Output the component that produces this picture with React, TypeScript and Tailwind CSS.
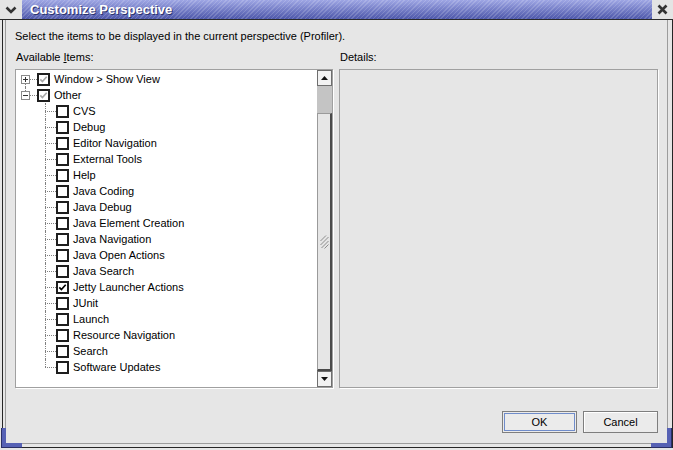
import React from 'react';

type CheckState = 'none' | 'checked' | 'grayed';

const children = [
  'CVS',
  'Debug',
  'Editor Navigation',
  'External Tools',
  'Help',
  'Java Coding',
  'Java Debug',
  'Java Element Creation',
  'Java Navigation',
  'Java Open Actions',
  'Java Search',
  'Jetty Launcher Actions',
  'JUnit',
  'Launch',
  'Resource Navigation',
  'Search',
  'Software Updates',
];

const CheckBox: React.FC<{ state: CheckState }> = ({ state }) => (
  <div className="w-[13px] h-[13px] shrink-0 border-2 border-[#1e1e1e] bg-white flex items-center justify-center">
    {state !== 'none' && (
      <svg width="9" height="9" viewBox="0 0 9 9">
        <path
          d="M1.3 4.3 L3.4 6.5 L7.7 1.8"
          fill="none"
          stroke={state === 'checked' ? '#000' : '#a8a8a8'}
          strokeWidth="1.7"
        />
      </svg>
    )}
  </div>
);

const Expander: React.FC<{ open: boolean }> = ({ open }) => (
  <div className="w-[9px] h-[9px] border border-[#8a8a8a] bg-white flex items-center justify-center relative">
    <div className="w-[5px] h-[1px] bg-[#333]" />
    {!open && <div className="absolute w-[1px] h-[5px] bg-[#333]" />}
  </div>
);

const TopRow: React.FC<{ label: string; open: boolean; first: boolean; last: boolean }> = ({ label, open, first, last }) => (
  <div className="flex items-center h-[16px]">
    <div className="ml-[5px] w-[9px] h-[16px] flex flex-col">
      <div className={`h-[4px] ml-[4px] ${first ? '' : 'border-l border-dotted border-[#808080]'}`} />
      <Expander open={open} />
      <div className={`h-[3px] ml-[4px] ${last ? '' : 'border-l border-dotted border-[#808080]'}`} />
    </div>
    <div className="w-[7px] h-0 border-t border-dotted border-[#808080]" />
    <CheckBox state="grayed" />
    <span className="ml-[4px] leading-[16px] whitespace-nowrap">{label}</span>
  </div>
);

const ChildRow: React.FC<{ label: string; last: boolean; state: CheckState }> = ({ label, last, state }) => (
  <div className="flex items-center h-[16px]">
    <div className="ml-[29px] w-[11px] h-[16px] flex flex-col">
      <div className="h-[8px] border-l border-dotted border-[#808080]" />
      <div className={`h-[8px] border-t border-dotted border-[#808080] ${last ? '' : 'border-l'}`} />
    </div>
    <CheckBox state={state} />
    <span className="ml-[4px] leading-[16px] whitespace-nowrap">{label}</span>
  </div>
);

const ScrollButton: React.FC<{ up: boolean }> = ({ up }) => (
  <div className="h-[16px] bg-[#f2f2f2] border border-[#6e6e6e] flex items-center justify-center">
    <svg width="7" height="4" viewBox="0 0 7 4">
      <path d={up ? 'M0 4 L3.5 0 L7 4 Z' : 'M0 0 L3.5 4 L7 0 Z'} fill="#111" />
    </svg>
  </div>
);

export default function App() {
  return (
    <div className="w-[673px] h-[450px] bg-[#e6e6e6] flex flex-col relative overflow-hidden font-['Liberation_Sans',Arial,sans-serif] text-[11px] text-black">
      {/* Title bar */}
      <div className="h-[20px] flex border-b border-[#2a2a2a] shrink-0">
        <div className="w-[22px] bg-[#e4e4e4] flex items-center justify-center">
          <svg width="12" height="8" viewBox="0 0 12 8">
            <path d="M1.5 1.5 L6 6 L10.5 1.5" fill="none" stroke="#333" strokeWidth="2.6" />
          </svg>
        </div>
        <div className="flex-1 flex items-center pl-[8px] bg-[image:repeating-linear-gradient(135deg,rgba(255,255,255,0.16)_0px,rgba(255,255,255,0.16)_1px,transparent_1px,transparent_3px),linear-gradient(to_bottom,#9ea6e4,#4d57aa)]">
          <span className="text-white font-bold text-[13px] leading-[19px] [text-shadow:1px_1px_0_#2c336e]">
            Customize Perspective
          </span>
        </div>
        <div className="w-[21px] bg-[#e4e4e4] flex items-center justify-center">
          <svg width="11" height="11" viewBox="0 0 11 11">
            <path d="M1.5 1.5 L9.5 9.5 M9.5 1.5 L1.5 9.5" fill="none" stroke="#333" strokeWidth="2.6" />
          </svg>
        </div>
      </div>

      {/* Frame */}
      <div className="flex-1 pl-[2px] pb-[2px] flex flex-col">
        <div className="flex-1 border-l border-r border-b border-[#262626] pl-[2px] pr-[4px] pb-[3px] flex flex-col">
          <div className="flex-1 border-l border-r border-b border-[#9c9c9c] pl-[9px] pr-[9px] pt-[10px] flex flex-col">
            <div className="leading-[13px] h-[13px]">
              Select the items to be displayed in the current perspective (Profiler).
            </div>

            <div className="mt-[8px] flex gap-[6px]">
              <div className="w-[318px] flex flex-col">
                <div className="leading-[13px] h-[13px] pl-[1px]">
                  Available <span className="underline">I</span>tems:
                </div>
                <div className="mt-[5px] h-[319px] border border-[#a0a0a0] shadow-[1px_1px_0_#ffffff] bg-white flex">
                  <div className="flex-1 pt-[1px] overflow-hidden">
                    <TopRow label="Window > Show View" open={false} first={true} last={false} />
                    <TopRow label="Other" open={true} first={false} last={true} />
                    {children.map((c, i) => (
                      <ChildRow
                        key={c}
                        label={c}
                        last={i === children.length - 1}
                        state={c === 'Jetty Launcher Actions' ? 'checked' : 'none'}
                      />
                    ))}
                  </div>
                  <div className="w-[15px] flex flex-col">
                    <ScrollButton up={true} />
                    <div className="h-[27px] bg-[#c4c4c4]" />
                    <div className="flex-1 bg-[#e6e6e6] border-l border-t border-[#9a9a9a] border-r-2 border-b-2 border-r-[#4a4a4a] border-b-[#4a4a4a] flex items-center justify-center">
                      <svg width="9" height="14" viewBox="0 0 9 14">
                        <path d="M0.5 6 L6 0.5 M0.5 10 L8.5 2 M1.5 13 L8.5 6 M4.5 13.5 L8.5 9.5" stroke="#8c8c8c" strokeWidth="1" />
                      </svg>
                    </div>
                    <ScrollButton up={false} />
                  </div>
                </div>
              </div>

              <div className="w-[319px] flex flex-col">
                <div className="leading-[13px] h-[13px] pl-[1px]">Details:</div>
                <div className="mt-[5px] h-[319px] border border-[#a0a0a0] shadow-[1px_1px_0_#ffffff] bg-[#e6e6e6]" />
              </div>
            </div>

            <div className="mt-[23px] flex justify-end gap-[6px]">
              <button className="w-[75px] h-[22px] bg-[#ebebeb] border border-[#7e7e7e] p-[1px] flex">
                <span className="flex-1 border border-[#6f8cca] flex items-center justify-center leading-none">OK</span>
              </button>
              <button className="w-[75px] h-[22px] bg-[#ebebeb] border border-[#7e7e7e] shadow-[inset_1px_1px_0_#ffffff] flex items-center justify-center leading-none">
                Cancel
              </button>
            </div>
          </div>
        </div>
      </div>

      {/* Blue resize corners */}
      <div className="absolute left-[1px] top-[428px] w-[5px] h-[20px] bg-[#5661b4] border-l border-[#2a2f66]" />
      <div className="absolute left-[1px] top-[443px] w-[21px] h-[5px] bg-[#5661b4] border-b border-l border-[#2a2f66]" />
      <div className="absolute right-[1px] top-[428px] w-[5px] h-[20px] bg-[#5661b4] border-r border-[#2a2f66]" />
      <div className="absolute right-[1px] top-[443px] w-[21px] h-[5px] bg-[#5661b4] border-b border-r border-[#2a2f66]" />
    </div>
  );
}
